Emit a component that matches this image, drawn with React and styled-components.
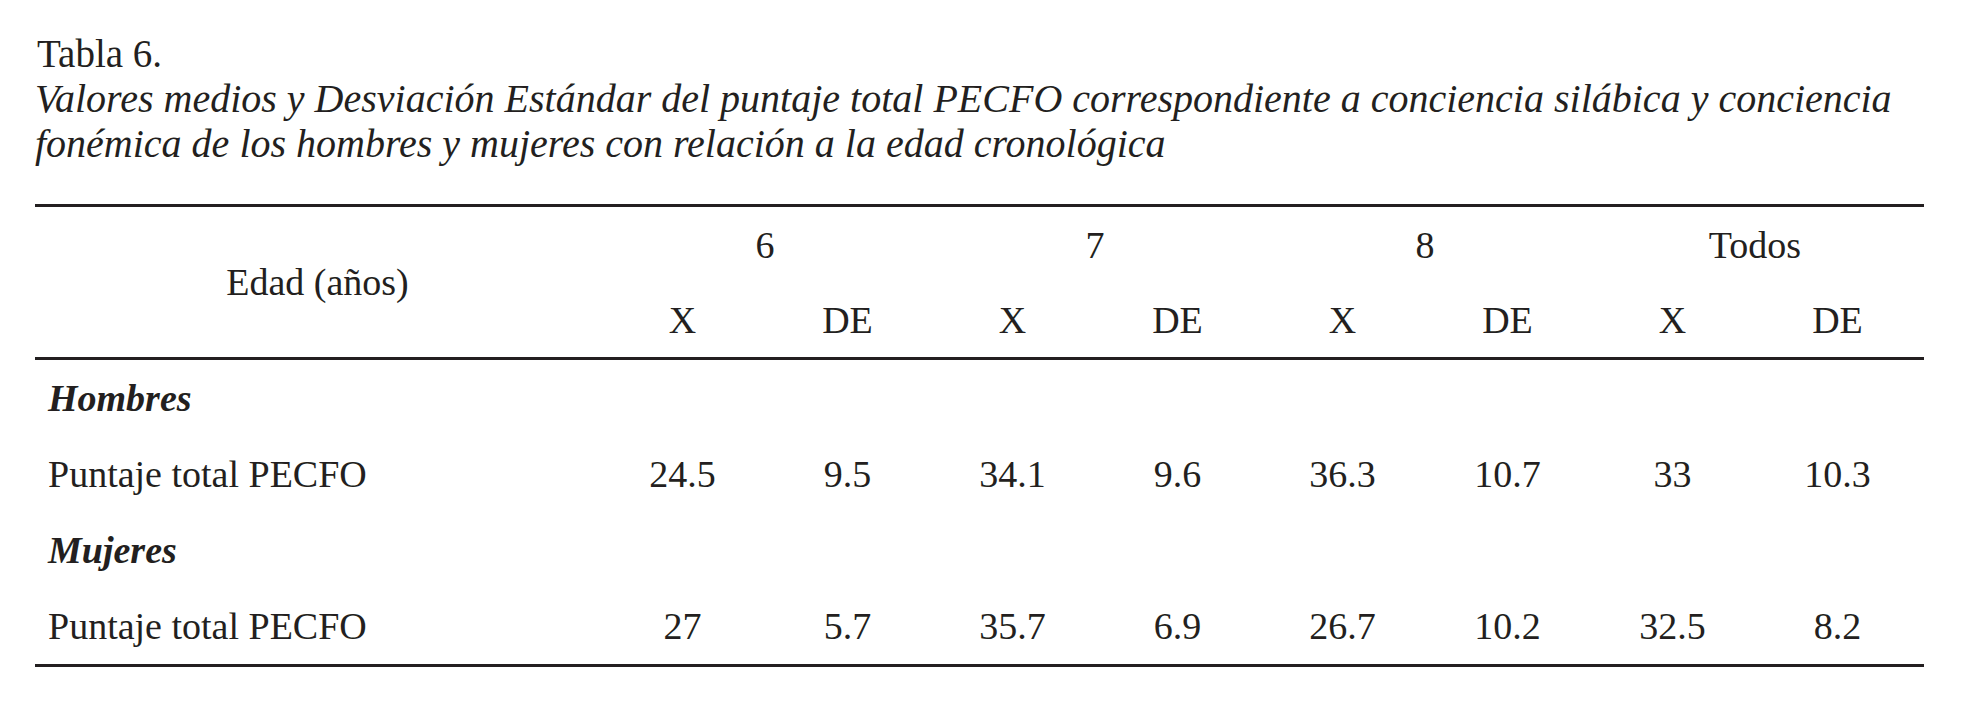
import React from 'react'
import styled, { createGlobalStyle } from 'styled-components'

const GlobalStyle = createGlobalStyle`
  html, body {
    margin: 0;
    padding: 0;
    background: #fff;
  }
  body {
    font-family: 'Liberation Serif', 'Times New Roman', serif;
    color: #231f20;
  }
`

const Page = styled.div`
  padding: 31px 0 0 35px;
  width: 1889px;
`

const Caption = styled.div`
  font-size: 39px;
  line-height: 45px;
  white-space: nowrap;
  margin-bottom: 38px;
`

const Label = styled.div`
  padding-left: 2px;
`

const Title = styled.div`
  font-style: italic;
  font-size: 40px;
`

const Grid = styled.div`
  display: grid;
  grid-template-columns: 565px repeat(8, 165px);
  grid-auto-rows: ${(p) => p.rowHeight}px;
  border-bottom: 3px solid #231f20;
  border-top: ${(p) => (p.top ? '3px solid #231f20' : 'none')};
  font-size: 38px;
  line-height: 38px;
`

const Cell = styled.div`
  display: flex;
  align-items: center;
  justify-content: ${(p) => (p.left ? 'flex-start' : 'center')};
  padding-left: ${(p) => (p.left ? '13px' : '0')};
  grid-column: ${(p) => (p.span ? `span ${p.span}` : 'auto')};
  grid-row: ${(p) => (p.rows ? `span ${p.rows}` : 'auto')};
  white-space: nowrap;
`

const Section = styled(Cell)`
  grid-column: 1 / -1;
  font-weight: bold;
  font-style: italic;
`

const groups = ['6', '7', '8', 'Todos']

const rows = [
  {
    section: 'Hombres',
    label: 'Puntaje total PECFO',
    values: ['24.5', '9.5', '34.1', '9.6', '36.3', '10.7', '33', '10.3'],
  },
  {
    section: 'Mujeres',
    label: 'Puntaje total PECFO',
    values: ['27', '5.7', '35.7', '6.9', '26.7', '10.2', '32.5', '8.2'],
  },
]

const App = () => {
  return (
    <Page>
      <GlobalStyle />
      <Caption>
        <Label>Tabla 6.</Label>
        <Title>
          Valores medios y Desviación Estándar del puntaje total PECFO correspondiente a
          conciencia silábica y conciencia
        </Title>
        <Title>fonémica de los hombres y mujeres con relación a la edad cronológica</Title>
      </Caption>

      <Grid top rowHeight={75}>
        <Cell rows={2}>Edad (años)</Cell>
        {groups.map((g) => (
          <Cell key={g} span={2}>
            {g}
          </Cell>
        ))}
        {groups.map((g) => (
          <React.Fragment key={g}>
            <Cell>X</Cell>
            <Cell>DE</Cell>
          </React.Fragment>
        ))}
      </Grid>

      <Grid rowHeight={76}>
        {rows.map((r) => (
          <React.Fragment key={r.section}>
            <Section left>{r.section}</Section>
            <Cell left>{r.label}</Cell>
            {r.values.map((v, i) => (
              <Cell key={i}>{v}</Cell>
            ))}
          </React.Fragment>
        ))}
      </Grid>
    </Page>
  )
}

export default App
